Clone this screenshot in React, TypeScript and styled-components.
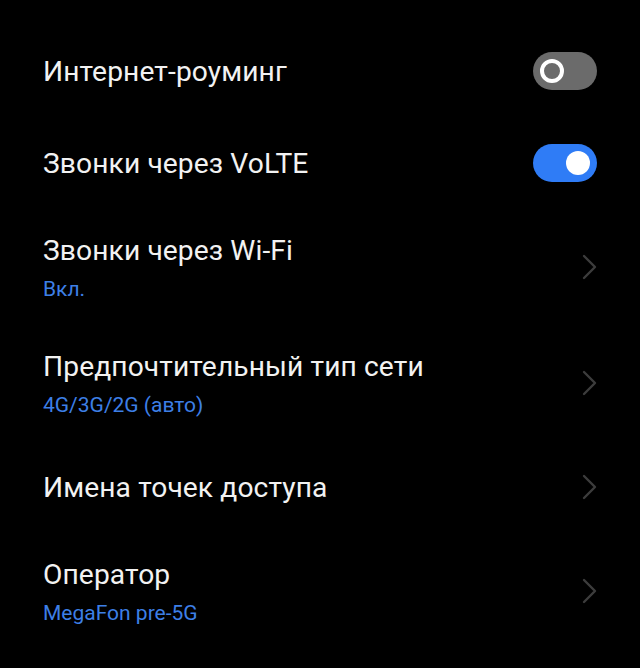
import React from "react";
import styled, { createGlobalStyle } from "styled-components";

type Item = {
	title: string;
	sub?: string;
	kind: "switch" | "link";
	on?: boolean;
};

const items: Item[] = [
	{ title: "Интернет-роуминг", kind: "switch", on: false },
	{ title: "Звонки через VoLTE", kind: "switch", on: true },
	{ title: "Звонки через Wi-Fi", sub: "Вкл.", kind: "link" },
	{ title: "Предпочтительный тип сети", sub: "4G/3G/2G (авто)", kind: "link" },
	{ title: "Имена точек доступа", kind: "link" },
	{ title: "Оператор", sub: "MegaFon pre-5G", kind: "link" },
];

const GlobalStyle = createGlobalStyle`
	html, body {
		margin: 0;
		padding: 0;
		background: #000;
	}
	body {
		font-family: Roboto, "Noto Sans", sans-serif;
	}
`;

const Screen = styled.div`
	width: 640px;
	height: 668px;
	background: #000;
	padding-top: 25px;
	box-sizing: border-box;
	overflow: hidden;
`;

const Row = styled.div<{ $tall: boolean }>`
	display: flex;
	align-items: center;
	justify-content: space-between;
	height: ${(p) => (p.$tall ? 116 : 92)}px;
	padding: 0 43px;
`;

const Texts = styled.div`
	display: flex;
	flex-direction: column;
	gap: 10px;
	padding-top: 2px;
`;

const Title = styled.div`
	color: #f2f2f2;
	font-size: 28.2px;
	line-height: 32px;
	letter-spacing: 0.1px;
`;

const Sub = styled.div`
	color: #3d7fe6;
	font-size: 21px;
	line-height: 24px;
`;

const Track = styled.div<{ $on: boolean }>`
	width: 64px;
	height: 38px;
	border-radius: 19px;
	background: ${(p) => (p.$on ? "#2f7cf6" : "#6b6b6b")};
	display: flex;
	align-items: center;
	justify-content: ${(p) => (p.$on ? "flex-end" : "flex-start")};
	padding: 0 7px;
	box-sizing: border-box;
`;

const Thumb = styled.div<{ $on: boolean }>`
	width: 24px;
	height: 24px;
	border-radius: 50%;
	box-sizing: border-box;
	background: ${(p) => (p.$on ? "#fff" : "transparent")};
	border: ${(p) => (p.$on ? "none" : "4.5px solid #fff")};
`;

const Chevron = styled.svg`
	width: 18px;
	height: 28px;
	margin-right: -2px;
`;

function Arrow() {
	return (
		<Chevron viewBox="0 0 18 28">
			<path d="M3 3 L14 14 L3 25" fill="none" stroke="#3c3c3c" strokeWidth="2.4" strokeLinecap="round" strokeLinejoin="round" />
		</Chevron>
	);
}

export default function App() {
	return (
		<>
			<GlobalStyle />
			<Screen>
				{items.map((it) => (
					<Row key={it.title} $tall={!!it.sub}>
						<Texts>
							<Title>{it.title}</Title>
							{it.sub && <Sub>{it.sub}</Sub>}
						</Texts>
						{it.kind === "switch" ? (
							<Track $on={!!it.on}>
								<Thumb $on={!!it.on} />
							</Track>
						) : (
							<Arrow />
						)}
					</Row>
				))}
			</Screen>
		</>
	);
}
